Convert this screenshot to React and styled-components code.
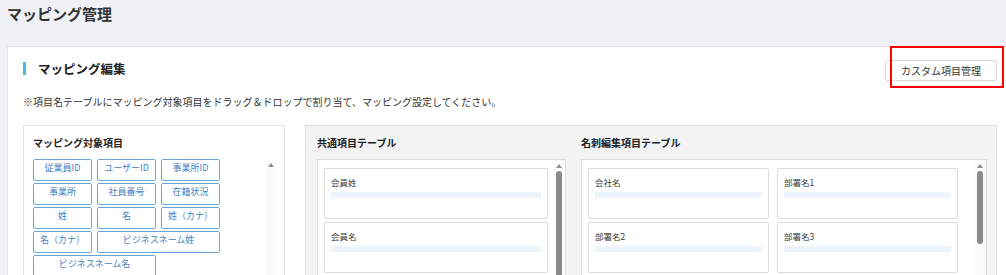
import styled, { createGlobalStyle } from "styled-components";

const GlobalStyle = createGlobalStyle`
	html, body {
		margin: 0;
		padding: 0;
		background: #eff1f5;
		overflow: hidden;
	}
	body {
		font-family: "Noto Sans CJK JP", "Noto Sans", sans-serif;
		color: #333;
	}
`;

const Page = styled.div`
	width: 1006px;
	height: 275px;
	overflow: hidden;
`;

const PageTitle = styled.h1`
	margin: 0;
	padding: 4px 0 0 7px;
	height: 42px;
	font-size: 15px;
	line-height: 20px;
	font-weight: 700;
	color: #333;
`;

const Card = styled.section`
	margin-left: 7px;
	width: 1007px;
	box-sizing: border-box;
	background: #fff;
	border: 1px solid #e3e4e6;
	padding: 11px 16px 0 15px;
	height: 260px;
`;

const CardHeader = styled.div`
	display: flex;
	align-items: center;
	justify-content: space-between;
	height: 21px;
`;

const SectionTitle = styled.h2`
	display: flex;
	align-items: center;
	gap: 12px;
	margin: 0;
	font-size: 12.5px;
	font-weight: 700;
	color: #222;

	&::before {
		content: "";
		display: block;
		width: 3px;
		height: 13px;
		background: #45bde6;
	}
`;

const HighlightWrap = styled.div`
	position: relative;
`;

const CustomButton = styled.button`
	width: 112px;
	height: 21px;
	padding: 0;
	background: #fff;
	border: 1px solid #dadada;
	border-radius: 2px;
	font-family: inherit;
	font-size: 10px;
	color: #333;
`;

const RedMark = styled.div`
	position: absolute;
	left: 5px;
	top: -10px;
	right: -7px;
	bottom: -7px;
	border: 2.5px solid #f00;
	pointer-events: none;
`;

const Note = styled.p`
	margin: 16px 0 0;
	font-size: 10px;
	line-height: 14px;
	color: #333;
`;

const Panels = styled.div`
	display: flex;
	gap: 20px;
	margin-top: 16px;
`;

const SourcePanel = styled.div`
	width: 262px;
	height: 200px;
	box-sizing: border-box;
	border: 1px solid #e2e2e2;
	background: #fff;
	padding: 10px 8px 0 9px;
`;

const PanelTitle = styled.h3`
	margin: 0 0 9px;
	font-size: 10px;
	line-height: 14px;
	font-weight: 700;
	color: #222;
`;

const SourceBody = styled.div`
	display: flex;
	justify-content: space-between;
`;

const ChipGrid = styled.div`
	display: grid;
	grid-template-columns: repeat(3, 59px);
	grid-auto-rows: 22px;
	gap: 2px 5px;
`;

const Chip = styled.div`
	grid-column: span ${({ span }) => span || 1};
	box-sizing: border-box;
	border: 1px solid #6ea5d8;
	border-radius: 2px;
	padding-top: 2px;
	text-align: center;
	font-size: 9px;
	line-height: 12px;
	color: #3f83c6;
`;

const Track = styled.div`
	display: flex;
	flex-direction: column;
	align-items: center;
	width: 10px;
	height: 160px;
	background: #fbfbfb;
`;

const Arrow = styled.div`
	margin-top: 4px;
	width: 0;
	height: 0;
	border-left: 3px solid transparent;
	border-right: 3px solid transparent;
	border-bottom: 4px solid #8e8e8e;
`;

const Thumb = styled.div`
	margin-top: 3px;
	width: 6px;
	height: ${({ h }) => h}px;
	border-radius: 3px;
	background: #8b8b8b;
`;

const TargetPanel = styled.div`
	flex: 1;
	height: 200px;
	box-sizing: border-box;
	display: grid;
	grid-template-columns: 249px 406px;
	gap: 15px;
	border: 1px solid #e0e0e0;
	background: #f3f3f3;
	padding: 10px 9px 0 11px;
`;

const TableColumn = styled.div`
	display: flex;
	flex-direction: column;
`;

const TableBox = styled.div`
	display: flex;
	justify-content: space-between;
	height: 140px;
	background: #fff;
	border: 1px solid #dedede;
	padding: 0 1px 0 0;
`;

const CardGrid = styled.div`
	display: grid;
	grid-template-columns: repeat(${({ cols }) => cols}, ${({ w }) => w}px);
	grid-auto-rows: 51px;
	gap: 3px 8px;
	padding: 8px 0 0 ${({ pl }) => pl}px;
	align-content: start;
`;

const FieldCard = styled.div`
	box-sizing: border-box;
	border: 1px solid #dcdcdc;
	border-radius: 2px;
	padding: 7px 6px 0;
`;

const FieldLabel = styled.div`
	font-size: 8.5px;
	line-height: 13px;
	color: #3a3a3a;
`;

const DropBar = styled.div`
	margin-top: 3px;
	height: 6px;
	background: #eef4fb;
`;

const chips = [
	{ label: "従業員ID" },
	{ label: "ユーザーID" },
	{ label: "事業所ID" },
	{ label: "事業所" },
	{ label: "社員番号" },
	{ label: "在籍状況" },
	{ label: "姓" },
	{ label: "名" },
	{ label: "姓（カナ）" },
	{ label: "名（カナ）" },
	{ label: "ビジネスネーム姓", span: 2 },
	{ label: "ビジネスネーム名", span: 2 },
];

const tables = [
	{ title: "共通項目テーブル", cols: 1, w: 224, pl: 6, thumb: 120, items: ["会員姓", "会員名"] },
	{ title: "名刺編集項目テーブル", cols: 2, w: 181, pl: 6, thumb: 73, items: ["会社名", "部署名1", "部署名2", "部署名3"] },
];

function ScrollBar({ thumb }) {
	return (
		<Track>
			<Arrow />
			{thumb && <Thumb h={thumb} />}
		</Track>
	);
}

function TableArea({ table }) {
	return (
		<TableColumn>
			<PanelTitle>{table.title}</PanelTitle>
			<TableBox>
				<CardGrid cols={table.cols} w={table.w} pl={table.pl}>
					{table.items.map((item) => (
						<FieldCard key={item}>
							<FieldLabel>{item}</FieldLabel>
							<DropBar />
						</FieldCard>
					))}
				</CardGrid>
				<ScrollBar thumb={table.thumb} />
			</TableBox>
		</TableColumn>
	);
}

export default function App() {
	return (
		<Page>
			<GlobalStyle />
			<PageTitle>マッピング管理</PageTitle>
			<Card>
				<CardHeader>
					<SectionTitle>マッピング編集</SectionTitle>
					<HighlightWrap>
						<CustomButton>カスタム項目管理</CustomButton>
						<RedMark />
					</HighlightWrap>
				</CardHeader>
				<Note>
					※項目名テーブルにマッピング対象項目をドラッグ＆ドロップで割り当て、マッピング設定してください。
				</Note>
				<Panels>
					<SourcePanel>
						<PanelTitle>マッピング対象項目</PanelTitle>
						<SourceBody>
							<ChipGrid>
								{chips.map((chip) => (
									<Chip key={chip.label} span={chip.span}>
										{chip.label}
									</Chip>
								))}
							</ChipGrid>
							<ScrollBar />
						</SourceBody>
					</SourcePanel>
					<TargetPanel>
						{tables.map((table) => (
							<TableArea key={table.title} table={table} />
						))}
					</TargetPanel>
				</Panels>
			</Card>
		</Page>
	);
}
